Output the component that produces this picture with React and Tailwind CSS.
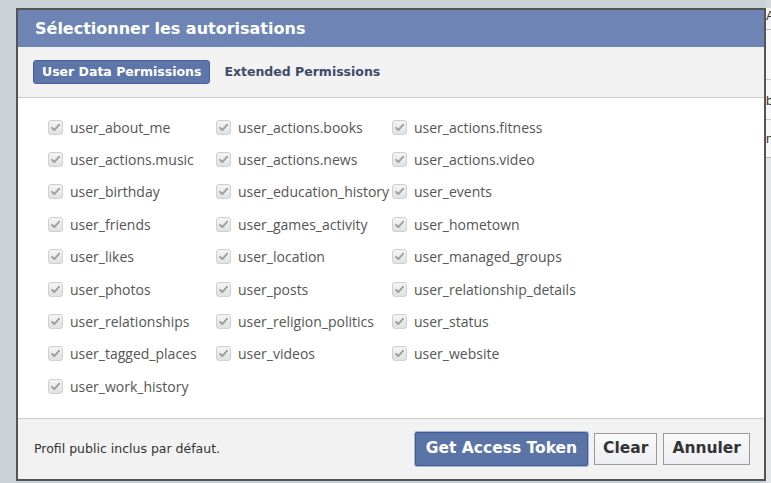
import React from 'react';

const permissions = [
    'user_about_me', 'user_actions.books', 'user_actions.fitness',
    'user_actions.music', 'user_actions.news', 'user_actions.video',
    'user_birthday', 'user_education_history', 'user_events',
    'user_friends', 'user_games_activity', 'user_hometown',
    'user_likes', 'user_location', 'user_managed_groups',
    'user_photos', 'user_posts', 'user_relationship_details',
    'user_relationships', 'user_religion_politics', 'user_status',
    'user_tagged_places', 'user_videos', 'user_website',
    'user_work_history',
];

// greyed-out, ticked checkbox
const CheckBox = () => (
    <span className="w-[15px] h-[15px] shrink-0 rounded-[3px] border border-[#cfcfcf] bg-gradient-to-b from-[#f4f4f4] to-[#e2e2e2] flex items-center justify-center">
        <svg width="11" height="11" viewBox="0 0 11 11">
            <path d="M2 5.8 L4.3 8.2 L9.2 2.6" fill="none" stroke="#9c9c9c" strokeWidth="1.8" strokeLinecap="round" strokeLinejoin="round" />
        </svg>
    </span>
);

const PermissionItem = ({ name }) => (
    <label className="h-[32.4px] flex items-center gap-[7px] whitespace-nowrap">
        <CheckBox />
        <span className="text-[14px] text-[#555] font-['Open_Sans',sans-serif]">{name}</span>
    </label>
);

const App = () => {
    return (
        <div className="w-[771px] h-[483px] bg-[#cbd3d8] flex overflow-hidden">
            <div className="w-4 shrink-0" />

            <div className="pt-2 shrink-0">
                <div className="w-[750px] h-[473px] border-2 border-[#545454] bg-white flex flex-col">
                    {/* header */}
                    <div className="h-[37px] bg-[#6d84b4] flex items-center pl-[17px]">
                        <h1 className="text-white font-bold text-[16px] font-['DejaVu_Sans',sans-serif]">
                            Sélectionner les autorisations
                        </h1>
                    </div>

                    {/* tabs */}
                    <div className="h-[51px] bg-[#f2f2f2] border-b border-[#cccccc] flex items-center pl-[15px] gap-[14px]">
                        <button className="h-6 px-[8px] rounded-[3px] bg-[#5d75a9] border border-[#46609a] text-white font-bold text-[12.5px] font-['DejaVu_Sans',sans-serif]">
                            User Data Permissions
                        </button>
                        <button className="text-[#3e4b6a] font-bold text-[12.5px] font-['DejaVu_Sans',sans-serif]">
                            Extended Permissions
                        </button>
                    </div>

                    {/* permission grid */}
                    <div className="flex-1 pt-[13px] pl-[30px]">
                        <div className="grid grid-cols-[168px_176px_1fr]">
                            {permissions.map(name => (
                                <PermissionItem key={name} name={name} />
                            ))}
                        </div>
                    </div>

                    {/* footer */}
                    <div className="h-[61px] bg-[#f2f2f2] border-t border-[#cccccc] flex items-center pl-4 pr-[14px]">
                        <p className="flex-1 text-[12.5px] text-[#333] font-['DejaVu_Sans',sans-serif]">
                            Profil public inclus par défaut.
                        </p>
                        <div className="flex items-center gap-[6px]">
                            <button className="h-[34px] px-[10px] bg-[#5b74a8] border border-[#42599a] rounded-[2px] shadow-[0_0_0_1px_#a9b7d6] text-white font-bold text-[15.5px] font-['DejaVu_Sans',sans-serif]">
                                Get Access Token
                            </button>
                            <button className="h-8 px-[8px] bg-gradient-to-b from-[#fafafa] to-[#eceef2] border border-[#9a9a9a] text-[#333] font-bold text-[15.5px] font-['DejaVu_Sans',sans-serif]">
                                Clear
                            </button>
                            <button className="h-8 px-[8px] bg-gradient-to-b from-[#fafafa] to-[#eceef2] border border-[#9a9a9a] text-[#333] font-bold text-[15.5px] font-['DejaVu_Sans',sans-serif]">
                                Annuler
                            </button>
                        </div>
                    </div>
                </div>
            </div>

            {/* sliver of the page behind the dialog */}
            <div className="flex-1 flex flex-col overflow-hidden text-[13px] text-[#333] font-['Liberation_Sans',sans-serif]">
                <div className="h-[8px] bg-[#d5d9dc]" />
                <div className="h-[22px] bg-[#f4f4f4] border-b border-[#bbb] leading-[16px]">A</div>
                <div className="h-[50px] bg-[#f7f7f7] border-b border-[#ccc]" />
                <div className="h-[40px] bg-[#f7f7f7] border-b border-[#ccc] pt-[14px] leading-[14px]">b</div>
                <div className="h-[38px] bg-[#f7f7f7] border-b border-[#bbb] pt-[12px] leading-[14px]">n</div>
                <div className="flex-1 bg-[#e4e6e9]" />
            </div>
        </div>
    );
};

export default App;
